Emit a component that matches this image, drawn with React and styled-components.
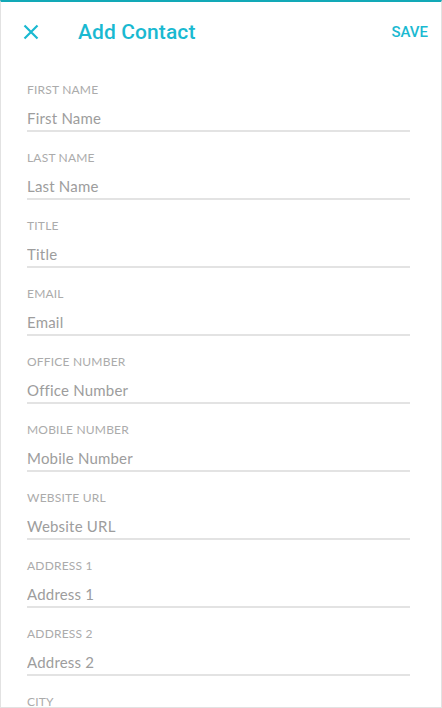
import React from 'react';
import styled, { createGlobalStyle } from 'styled-components';

const GlobalStyle = createGlobalStyle`
  html, body {
    margin: 0;
    padding: 0;
    background: #fff;
  }
`;

const Panel = styled.div`
  box-sizing: border-box;
  width: 442px;
  height: 708px;
  overflow: hidden;
  border-top: 2px solid #12a9b7;
  border-left: 1px solid #e2e2e2;
  border-right: 1px solid #e2e2e2;
  border-bottom: 1px solid #e2e2e2;
  background: #fff;
`;

const Header = styled.div`
  height: 60px;
  display: flex;
  align-items: center;
  padding: 0 13px 0 21px;
`;

const CloseButton = styled.button`
  border: 0;
  background: none;
  padding: 0;
  width: 18px;
  height: 18px;
  display: flex;
  align-items: center;
  justify-content: center;
  cursor: pointer;
`;

const Title = styled.h1`
  margin: 0 0 0 38px;
  flex: 1;
  font-family: Roboto, "Liberation Sans", sans-serif;
  font-weight: 500;
  font-size: 21px;
  letter-spacing: 0.1px;
  color: #1ab9d1;
`;

const SaveButton = styled.button`
  border: 0;
  background: none;
  padding: 0;
  font-family: Roboto, "Liberation Sans", sans-serif;
  font-weight: 500;
  font-size: 15px;
  color: #1ab9d1;
  cursor: pointer;
`;

const Form = styled.form`
  padding: 20px 0 0 26px;
  width: 383px;
`;

const Field = styled.div`
  display: flex;
  flex-direction: column;
  margin-bottom: 18px;
`;

const Label = styled.label`
  font-family: Lato, "Open Sans", sans-serif;
  font-size: 12px;
  line-height: 16px;
  letter-spacing: 0.2px;
  color: #ababab;
  text-transform: uppercase;
  margin-bottom: 8px;
`;

const Input = styled.input`
  border: 0;
  border-bottom: 2px solid #e3e3e3;
  height: 24px;
  padding: 0;
  font-family: Lato, "Open Sans", sans-serif;
  font-size: 15px;
  letter-spacing: 0.2px;
  color: #555;
  outline: none;
  background: transparent;
  &::placeholder {
    color: #9d9d9d;
  }
`;

const fields = [
  'First Name',
  'Last Name',
  'Title',
  'Email',
  'Office Number',
  'Mobile Number',
  'Website URL',
  'Address 1',
  'Address 2',
  'City',
];

const CloseIcon = () => (
  <svg width="16" height="16" viewBox="0 0 16 16">
    <path d="M1.5 1.5 L14.5 14.5 M14.5 1.5 L1.5 14.5" stroke="#1ab9d1" strokeWidth="2.2" fill="none" />
  </svg>
);

const App = () => {
  return (
    <>
      <GlobalStyle />
      <Panel>
        <Header>
          <CloseButton aria-label="Close">
            <CloseIcon />
          </CloseButton>
          <Title>Add Contact</Title>
          <SaveButton>SAVE</SaveButton>
        </Header>
        <Form>
          {fields.map((name) => (
            <Field key={name}>
              <Label>{name}</Label>
              <Input placeholder={name} />
            </Field>
          ))}
        </Form>
      </Panel>
    </>
  );
};

export default App;
